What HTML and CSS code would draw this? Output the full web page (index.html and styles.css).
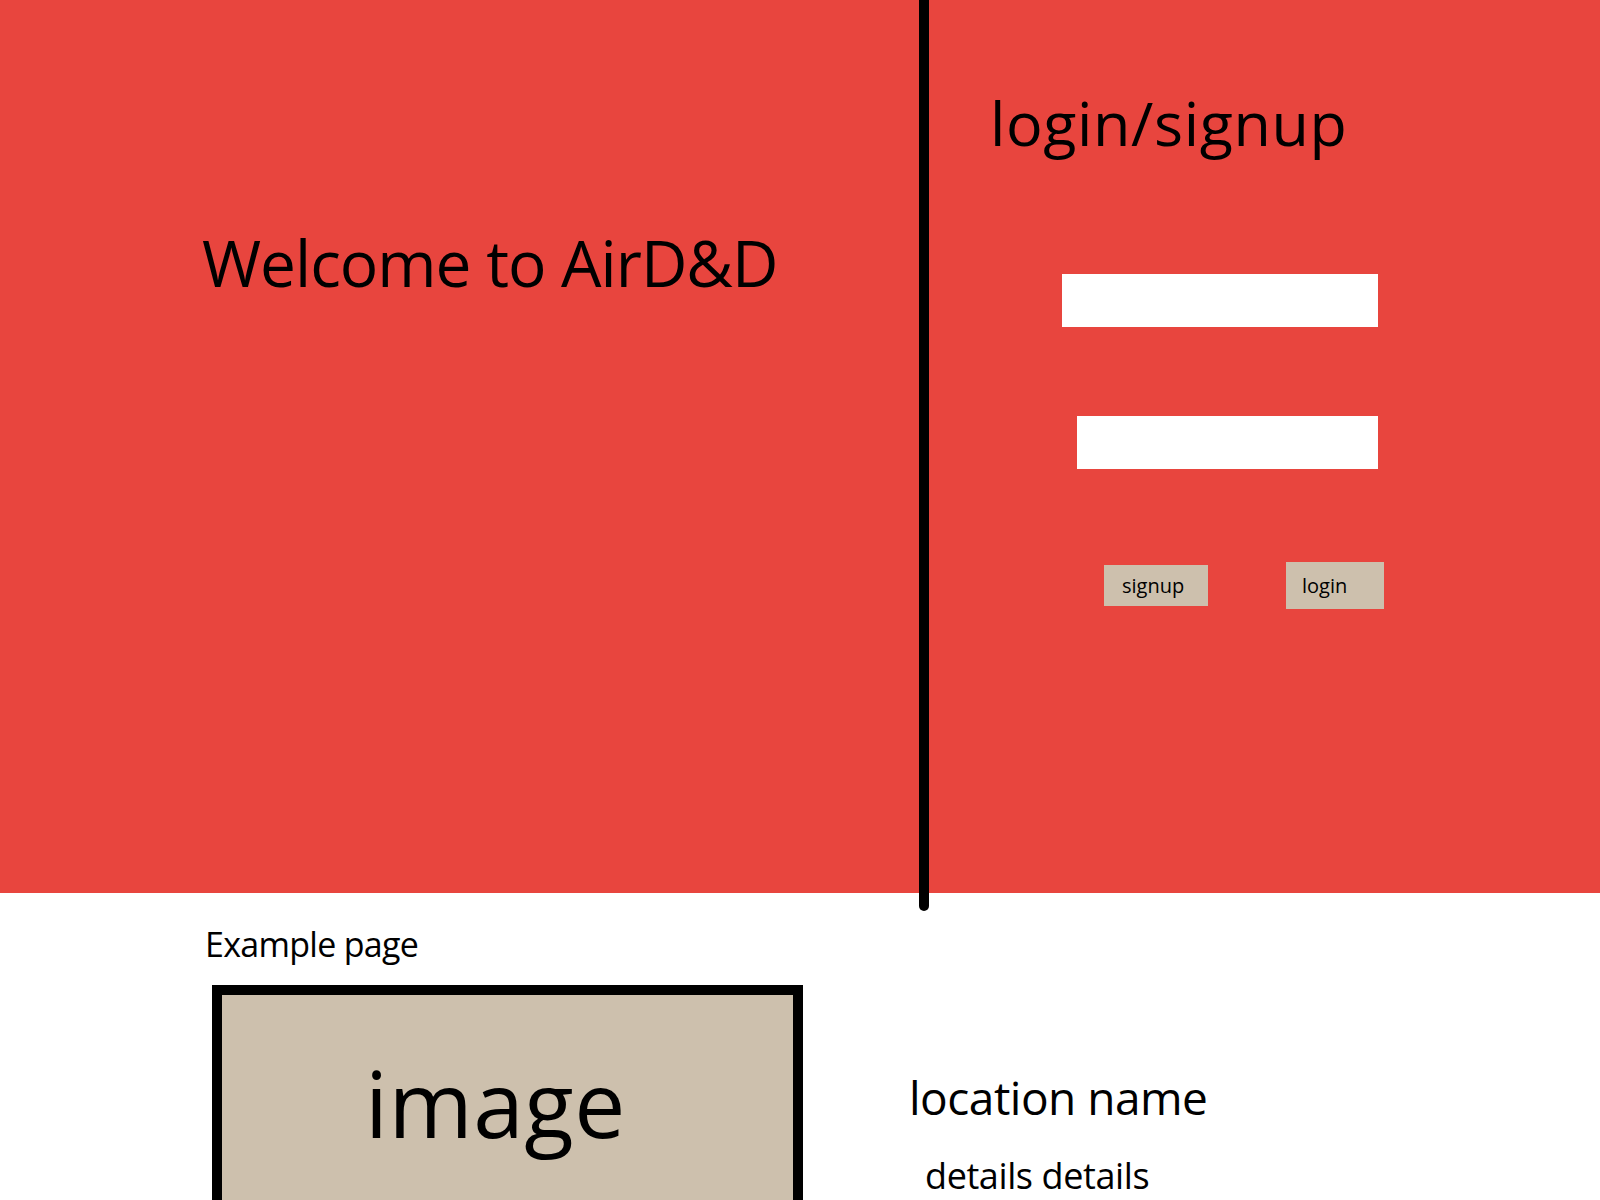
FILE: index.html
```html
<!DOCTYPE html>
<html lang="en">
<head>
<meta charset="utf-8">
<title>AirD&amp;D</title>
<link rel="stylesheet" href="styles.css">
</head>
<body>
  <header class="hero">
    <section class="hero-left">
      <h1 class="welcome">Welcome to AirD&amp;D</h1>
    </section>
    <div class="divider"></div>
    <section class="hero-right">
      <h2 class="auth-title">login/signup</h2>
      <input class="field field-user" type="text" aria-label="username">
      <input class="field field-pass" type="password" aria-label="password">
      <div class="actions">
        <button class="btn btn-signup" type="button">signup</button>
        <button class="btn btn-login" type="button">login</button>
      </div>
    </section>
  </header>
  <main class="example">
    <section class="example-left">
      <h3 class="example-label">Example page</h3>
      <div class="image-box"><span class="image-text">image</span></div>
    </section>
    <section class="example-right">
      <h3 class="location-name">location name</h3>
      <p class="details">details details</p>
    </section>
  </main>
</body>
</html>
```

FILE: styles.css
```css
html, body {
  margin: 0;
  padding: 0;
  background: #ffffff;
}
body {
  font-family: "Open Sans", "Noto Sans", "DejaVu Sans", sans-serif;
  color: #000;
  overflow: hidden;
}
h1, h2, h3, p {
  margin: 0;
  font-weight: 400;
}

.hero {
  display: flex;
  height: 893px;
  background: #e8453e;
}
.hero-left {
  width: 919px;
  flex-shrink: 0;
  padding-top: 231px;
  box-sizing: border-box;
}
.welcome {
  margin-left: 202px;
  font-size: 64px;
  line-height: 1;
  letter-spacing: -1px;
  white-space: nowrap;
}
.divider {
  width: 10px;
  height: 911px;
  flex-shrink: 0;
  background: #000;
  border-radius: 0 0 5px 5px;
  position: relative;
  z-index: 1;
}
.hero-right {
  flex: 1;
  display: flex;
  flex-direction: column;
  align-items: flex-start;
  padding-top: 92px;
}
.auth-title {
  margin-left: 61px;
  font-size: 61px;
  line-height: 1;
  letter-spacing: 0.6px;
  white-space: nowrap;
}
.field {
  display: block;
  border: 0;
  padding: 0;
  background: #fff;
  height: 53px;
  outline: none;
}
.field-user {
  margin-top: 121px;
  margin-left: 133px;
  width: 316px;
}
.field-pass {
  margin-top: 89px;
  margin-left: 148px;
  width: 301px;
}
.actions {
  display: flex;
  align-items: center;
  margin-top: 93px;
  margin-left: 175px;
  gap: 78px;
  height: 47px;
}
.btn {
  border: 0;
  background: #cdc0ad;
  font-family: "Open Sans", "Noto Sans", sans-serif;
  font-size: 20px;
  color: #000;
  text-align: left;
  padding: 0;
}
.btn-signup {
  width: 104px;
  height: 41px;
  padding-left: 18px;
}
.btn-login {
  width: 98px;
  height: 47px;
  padding-left: 16px;
}

.example {
  display: flex;
  align-items: flex-start;
}
.example-left {
  padding-left: 205px;
}
.example-label {
  margin-top: 34px;
  font-size: 34px;
  line-height: 1;
  letter-spacing: -0.7px;
  white-space: nowrap;
}
.image-box {
  margin-top: 24px;
  margin-left: 7px;
  width: 591px;
  height: 320px;
  box-sizing: border-box;
  border: 10px solid #000;
  background: #cdc0ad;
  padding-top: 63px;
  padding-left: 143px;
}
.image-text {
  display: block;
  font-size: 91px;
  line-height: 1;
  letter-spacing: 0.5px;
}
.example-right {
  margin-left: 106px;
  padding-top: 181px;
}
.location-name {
  font-size: 46px;
  line-height: 1;
  letter-spacing: -0.5px;
  white-space: nowrap;
}
.details {
  margin-top: 38px;
  margin-left: 16px;
  font-size: 36px;
  line-height: 1;
  letter-spacing: -0.4px;
  white-space: nowrap;
}
```
